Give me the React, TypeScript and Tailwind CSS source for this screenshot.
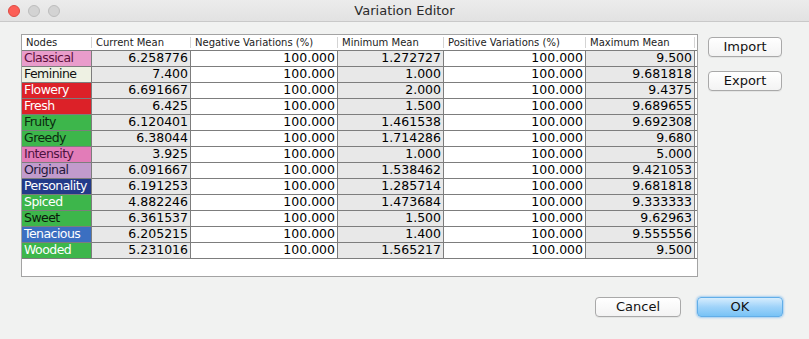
import React from "react";

type Row = {
  name: string;
  bg: string;
  fg: string;
  cur: string;
  min: string;
  max: string;
};

const rows: Row[] = [
  { name: "Classical", bg: "bg-[#e99ccb]", fg: "text-[#5e0f3c]", cur: "6.258776", min: "1.272727", max: "9.500" },
  { name: "Feminine", bg: "bg-[#eef1e3]", fg: "text-[#111111]", cur: "7.400", min: "1.000", max: "9.681818" },
  { name: "Flowery", bg: "bg-[#dc2128]", fg: "text-white", cur: "6.691667", min: "2.000", max: "9.4375" },
  { name: "Fresh", bg: "bg-[#dc2128]", fg: "text-white", cur: "6.425", min: "1.500", max: "9.689655" },
  { name: "Fruity", bg: "bg-[#3db64b]", fg: "text-[#0b2a0f]", cur: "6.120401", min: "1.461538", max: "9.692308" },
  { name: "Greedy", bg: "bg-[#3db64b]", fg: "text-[#0b2a0f]", cur: "6.38044", min: "1.714286", max: "9.680" },
  { name: "Intensity", bg: "bg-[#e27cb8]", fg: "text-[#4d1340]", cur: "3.925", min: "1.000", max: "5.000" },
  { name: "Original", bg: "bg-[#c29bcc]", fg: "text-[#24183a]", cur: "6.091667", min: "1.538462", max: "9.421053" },
  { name: "Personality", bg: "bg-[#233b89]", fg: "text-white", cur: "6.191253", min: "1.285714", max: "9.681818" },
  { name: "Spiced", bg: "bg-[#3db64b]", fg: "text-white", cur: "4.882246", min: "1.473684", max: "9.333333" },
  { name: "Sweet", bg: "bg-[#3db64b]", fg: "text-[#0a1a0a]", cur: "6.361537", min: "1.500", max: "9.62963" },
  { name: "Tenacious", bg: "bg-[#3b6fc1]", fg: "text-white", cur: "6.205215", min: "1.400", max: "9.555556" },
  { name: "Wooded", bg: "bg-[#3db64b]", fg: "text-white", cur: "5.231016", min: "1.565217", max: "9.500" },
];

const headers: { label: string; w: string }[] = [
  { label: "Nodes", w: "w-[70px]" },
  { label: "Current Mean", w: "w-[99px]" },
  { label: "Negative Variations (%)", w: "w-[147px]" },
  { label: "Minimum Mean", w: "w-[106px]" },
  { label: "Positive Variations (%)", w: "w-[142px]" },
  { label: "Maximum Mean", w: "w-[109px]" },
];

const font = { fontFamily: '"DejaVu Sans", "Lucida Grande", sans-serif' };

function NumCell({ w, value, gray }: { w: string; value: string; gray?: boolean }) {
  return (
    <div
      className={`${w} h-full shrink-0 border-r border-[#7d7d7d] flex items-center justify-end pr-[2px] text-[12.5px] text-black ${
        gray ? "bg-[#e8e8e8]" : "bg-white"
      }`}
    >
      {value}
    </div>
  );
}

function Button({ label, className, primary }: { label: string; className: string; primary?: boolean }) {
  return (
    <div
      className={`${className} h-[20px] rounded-[4px] flex items-center justify-center text-[13px] text-[#111] ${
        primary
          ? "border border-[#62aee8] bg-gradient-to-b from-[#d6edfd] via-[#9fd3f9] to-[#78c3f6] shadow-[0_0_2px_1px_rgba(110,180,240,0.6)]"
          : "border border-[#a9a9a9] bg-gradient-to-b from-white to-[#f3f3f3] shadow-[0_1px_0_rgba(0,0,0,0.05)]"
      }`}
    >
      {label}
    </div>
  );
}

export default function App() {
  return (
    <div className="w-[809px] h-[339px] bg-[#f1f2f1] flex flex-col overflow-hidden" style={font}>
      {/* Title bar */}
      <div className="h-[22px] shrink-0 relative flex items-center bg-gradient-to-b from-[#ececec] to-[#e2e2e2] border-b border-[#c9c9c9]">
        <div className="flex items-center gap-[8px] pl-[8px]">
          <div className="w-[12px] h-[12px] rounded-full bg-[#fc5f57] border border-[#de4a42]" />
          <div className="w-[12px] h-[12px] rounded-full bg-[#d3d3d3] border border-[#bdbdbd]" />
          <div className="w-[12px] h-[12px] rounded-full bg-[#d3d3d3] border border-[#bdbdbd]" />
        </div>
        <div className="absolute inset-0 flex items-center justify-center text-[13px] text-[#2a2a2a]">
          Variation Editor
        </div>
      </div>

      {/* Body */}
      <div className="flex pt-[12px]">
        {/* Table pane */}
        <div className="ml-[21px] w-[677px] h-[243px] border border-[#a3a3a3] bg-white flex flex-col">
          {/* header */}
          <div className="h-[16px] flex border-b border-[#7d7d7d] bg-white">
            {headers.map((h) => (
              <div key={h.label} className={`${h.w} shrink-0 h-full relative flex items-center pl-[4px] text-[10px] text-[#222]`}>
                {h.label}
                <div className="absolute right-0 top-[2px] h-[11px] w-px bg-[#d4d4d4]" />
              </div>
            ))}
          </div>
          {rows.map((r) => (
            <div key={r.name} className="h-[16px] flex border-b border-[#7d7d7d]">
              <div
                className={`w-[70px] shrink-0 h-full border-r border-[#7d7d7d] flex items-center pl-[2px] text-[12.5px] tracking-[-0.55px] ${r.bg} ${r.fg}`}
              >
                {r.name}
              </div>
              <NumCell w="w-[99px]" value={r.cur} gray />
              <NumCell w="w-[147px]" value="100.000" />
              <NumCell w="w-[106px]" value={r.min} gray />
              <NumCell w="w-[142px]" value="100.000" />
              <NumCell w="w-[109px]" value={r.max} gray />
            </div>
          ))}
        </div>

        {/* Side buttons */}
        <div className="ml-[10px] pt-[3px] flex flex-col gap-[14px]">
          <Button label="Import" className="w-[74px]" />
          <Button label="Export" className="w-[74px]" />
        </div>
      </div>

      {/* Bottom buttons */}
      <div className="flex justify-end gap-[16px] pr-[26px] pt-[20px]">
        <Button label="Cancel" className="w-[86px]" />
        <Button label="OK" className="w-[86px]" primary />
      </div>
    </div>
  );
}
